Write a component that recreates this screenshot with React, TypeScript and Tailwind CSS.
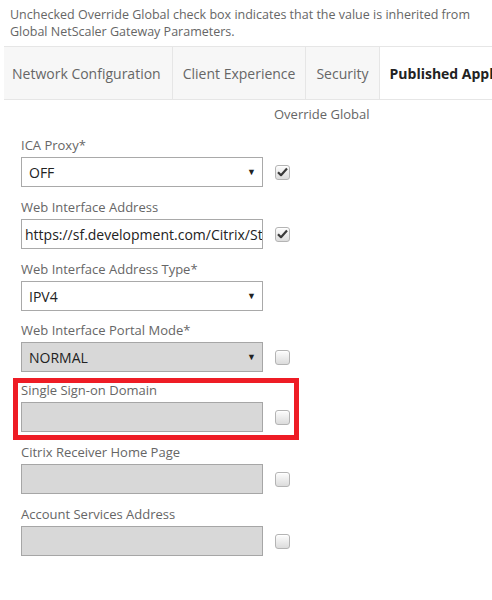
import React from 'react';

type Field = {
  label: string;
  kind: 'select' | 'text';
  value?: string;
  disabled?: boolean;
  checked?: boolean;
  noOverride?: boolean;
  highlight?: boolean;
  gapClass: string;
};

const fields: Field[] = [
  { label: 'ICA Proxy*', kind: 'select', value: 'OFF', checked: true, gapClass: '' },
  { label: 'Web Interface Address', kind: 'text', value: 'https://sf.development.com/Citrix/StoreWeb', checked: true, gapClass: 'mt-[11px]' },
  { label: 'Web Interface Address Type*', kind: 'select', value: 'IPV4', noOverride: true, gapClass: 'mt-[11px]' },
  { label: 'Web Interface Portal Mode*', kind: 'select', value: 'NORMAL', disabled: true, gapClass: 'mt-[10px]' },
  { label: 'Single Sign-on Domain', kind: 'text', disabled: true, highlight: true, gapClass: 'mt-[9px]' },
  { label: 'Citrix Receiver Home Page', kind: 'text', disabled: true, gapClass: 'mt-[11px]' },
  { label: 'Account Services Address', kind: 'text', disabled: true, gapClass: 'mt-[11px]' },
];

const tabs = ['Network Configuration', 'Client Experience', 'Security', 'Published Applications'];

const Checkbox = ({ checked }: { checked?: boolean }) => (
  <span className="flex h-[15px] w-[15px] items-center justify-center rounded-[3px] border border-[#b4b4b4] bg-gradient-to-b from-[#fdfdfd] to-[#dcdcdc] shadow-[inset_0_1px_0_#fff]">
    {checked && (
      <svg width="11" height="10" viewBox="0 0 11 10">
        <path d="M1 5.2 L4 8.2 L10 1.6" fill="none" stroke="#3a3a3a" strokeWidth="2.2" strokeLinejoin="round" />
      </svg>
    )}
  </span>
);

const Control = ({ f }: { f: Field }) => {
  const bg = f.disabled ? 'bg-[#d8d8d8] border-[#a6a6a6]' : 'bg-white border-[#a9a9a9]';
  return (
    <div className={`flex h-[30px] w-[242px] shrink-0 items-center overflow-hidden border ${bg}`}>
      {f.kind === 'select' ? (
        <>
          <span className="flex-1 pl-[7px] text-[14px] text-[#222]">{f.value}</span>
          <span className="mr-[6px] text-[9px] text-[#222]">▼</span>
        </>
      ) : (
        <span className="whitespace-nowrap pl-[3px] text-[14px] text-[#222]">{f.value ?? ''}</span>
      )}
    </div>
  );
};

const FieldRow = ({ f }: { f: Field }) => (
  <div className={`relative flex flex-col ${f.gapClass}`}>
    {/* red annotation frame drawn over the row */}
    {f.highlight && (
      <div className="pointer-events-none absolute -left-[8px] -top-[3px] h-[62px] w-[286px] border-[5px] border-[#ee1c25]" />
    )}
    <label className="mb-[3px] h-[18px] text-[13px] leading-[18px] text-[#666]">{f.label}</label>
    <div className="flex items-center gap-[12px]">
      <Control f={f} />
      {!f.noOverride && <Checkbox checked={f.checked} />}
    </div>
  </div>
);

export default function App() {
  return (
    <div className="h-[600px] w-[492px] overflow-hidden bg-white [font-family:'Open_Sans',sans-serif]">
      <p className="px-[10px] pt-[6px] text-[12.5px] leading-[17px] text-[#666]">
        Unchecked Override Global check box indicates that the value is inherited from Global NetScaler Gateway Parameters.
      </p>
      <div className="ml-[4px] mt-[6px] flex h-[54px] border-y border-[#e6e6e6] bg-[#f7f7f7]">
        {tabs.map((t, i) => {
          const active = i === tabs.length - 1;
          return (
            <div
              key={t}
              className={`flex shrink-0 items-center whitespace-nowrap border-r border-[#e6e6e6] text-[14px] ${
                i === 0 ? 'pl-[8px] pr-[11px]' : 'px-[10px]'
              } ${active ? 'bg-white font-bold text-[#222]' : 'text-[#666]'}`}
            >
              {t}
            </div>
          );
        })}
      </div>
      <div className="ml-[274px] mt-[5px] text-[13px] leading-[18px] text-[#666]">Override Global</div>
      <div className="mt-[13px] flex flex-col pl-[21px]">
        {fields.map((f) => (
          <FieldRow key={f.label} f={f} />
        ))}
      </div>
    </div>
  );
}
